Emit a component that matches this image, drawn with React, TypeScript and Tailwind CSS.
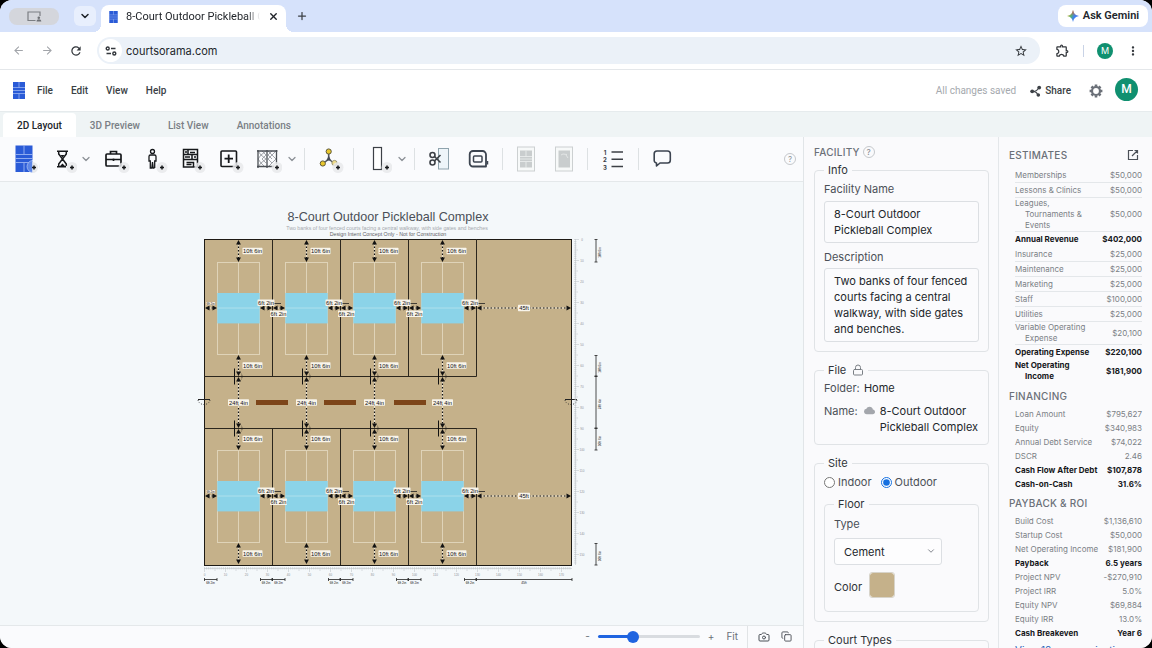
import { useState, type ReactNode } from 'react';
import { ChevronDown, Camera, Copy, Lock, Plus, X } from 'lucide-react';
import { MdArrowBack, MdArrowForward, MdCloud, MdMoreVert, MdOutlineExtension, MdRefresh, MdStarBorder } from 'react-icons/md';
import clsx from 'clsx';

/* ---------- icons ---------- */

function CourtLogo({ className }: { className?: string }) {
    return (
        <svg viewBox="0 0 12 17" className={className} aria-hidden="true">
            <rect width="12" height="17" fill="#2a5bd7" />
            <path d="M6 0v5.5M6 11.500V17M0 5.500h12M0 8.500h12M0 11.500h12" stroke="#a9c0f5" strokeWidth=".7" />
        </svg>
    );
}

function AddBadge({ x = 24 }: { x?: number }) {
    return (
        <g>
            <circle cx={x} cy="23.500" r="5.500" fill="#e7e9eb" fillOpacity=".85" />
            <path d={`M${x - 2} 23.500h4M${x} 21.500v4`} stroke="#16181b" strokeWidth="1.500" />
        </g>
    );
}

const ink = '#16181b';

const drawings = {
    court: (
        <>
            <rect x="5.500" y="1.500" width="17" height="26.500" fill="#2a5bd7" />
            <path d="M14 1.500v8.500M14 19v9M5.500 10.500h17M5.500 14.500h17M5.500 18.500h17" stroke="#a9c0f5" strokeWidth=".8" />
            <circle cx="23" cy="22.500" r="6" fill="#5d86e6" stroke="#a9c0f5" strokeWidth=".8" />
            <rect x="22.500" y="16" width="7" height="13" fill="#fafbfd" />
            <path d="M22.500 18a5.500 5.500 0 0 1 0 11z" fill="#e7e9eb" />
            <path d="M22 23.500h4M24 21.500v4" stroke={ink} strokeWidth="1.500" />
        </>
    ),
    hourglass: (
        <>
            <path d="M10 7.200h11M10 22.800h9M11.700 7.500v2.500l3.800 5-3.800 5v2.500M19.300 7.500v2.500l-3.800 5 3.800 5v2" fill="none" stroke={ink} strokeWidth="1.500" />
            <path d="M13.500 11h4l-2 2.500zM13 22l2.500-2.500L18 22z" fill={ink} />
            <AddBadge x={25} />
        </>
    ),
    briefcase: (
        <>
            <rect x="6" y="10" width="15" height="12" rx="1" fill="none" stroke={ink} strokeWidth="1.700" />
            <path d="M10.500 10V7.500h6V10M6 15.500h15M13.500 14.500v2.500" fill="none" stroke={ink} strokeWidth="1.700" />
            <AddBadge />
        </>
    ),
    person: (
        <>
            <circle cx="14.500" cy="7.500" r="2" fill="none" stroke={ink} strokeWidth="1.300" />
            <path d="M12.500 11h4c1 0 1.500.7 1.500 1.500v4.500h-1.300v7M12.500 11c-1 0-1.500.7-1.500 1.500v4.500h1.300v7h1.500l.7-6 .7 6h1.300" fill="none" stroke={ink} strokeWidth="1.300" />
            <AddBadge />
        </>
    ),
    desk: (
        <>
            <path d="M7.500 5.500h14v17.500h-14zM7.500 10.500h14M7.500 15.500h14M12 5.500v5M16 10.500v5M10.500 18.500h7v4M10.500 20.500h5" fill="none" stroke={ink} strokeWidth="1.500" />
            <path d="M9 8h2M14 8.500h5M9 13h5M18 13h2" stroke={ink} strokeWidth="1.400" />
            <AddBadge />
        </>
    ),
    box: (
        <>
            <rect x="7" y="7" width="15.500" height="15.500" rx="1" fill="none" stroke={ink} strokeWidth="1.600" />
            <path d="M10.500 14.700h8.500M14.700 10.500v8.500" stroke={ink} strokeWidth="1.800" />
            <AddBadge />
        </>
    ),
    fence: (
        <>
            <path d="M6 7l3 4-3 4 3 4-3 4M14 7l-5 4 5 4-5 4 4 4M10 7l4 4-4 4 4 4M16 7l4 4-4 4 4 4-4 4M24 7l-4 4 4 4-4 4M20 7l-4 4 4 4" fill="none" stroke="#8d9197" strokeWidth=".8" />
            <path d="M6 6v18M15 6v18M24.500 6v14M5 7h20.500M5 22.500h17" fill="none" stroke="#4b4f55" strokeWidth="1.300" />
            <AddBadge x={25} />
        </>
    ),
    nodes: (
        <>
            <path d="M13.700 9v6l-5 4M13.700 15l5 4" fill="none" stroke="#565b63" strokeWidth="1.600" />
            <path d="M13.700 11.500l2.300 5h-4.600z" fill="#464b55" />
            <circle cx="13.700" cy="7.500" r="2.600" fill="#e8c62d" stroke="#5f5a3b" />
            <circle cx="7.800" cy="19.500" r="2.600" fill="#e8c62d" stroke="#5f5a3b" />
            <circle cx="19.500" cy="19" r="2.600" fill="#efdc8a" stroke="#9a9573" />
            <AddBadge x={23} />
        </>
    ),
    door: (
        <>
            <rect x="11.500" y="3.500" width="8" height="22" fill="#fff" stroke="#3c4046" strokeWidth="1.200" />
            <AddBadge x={25} />
        </>
    ),
    scissors: (
        <>
            <rect x="14.500" y="4.500" width="10" height="20.500" fill="#eef5f9" stroke="#8fa3ad" />
            <circle cx="8.500" cy="11" r="2.500" fill="none" stroke="#3c4046" strokeWidth="1.600" />
            <circle cx="8.500" cy="18.500" r="2.500" fill="none" stroke="#3c4046" strokeWidth="1.600" />
            <path d="M10.500 12.500l6 6M10.500 17l6-6" stroke="#3c4046" strokeWidth="1.600" />
        </>
    ),
    tape: (
        <>
            <path d="M9 7h9.500a3.500 3.500 0 0 1 3.500 3.500V22.500H9a3.300 3.300 0 0 1-3.300-3.300V10.300A3.300 3.300 0 0 1 9 7z" fill="none" stroke="#3c4450" strokeWidth="1.800" strokeLinejoin="round" />
            <rect x="9.500" y="12" width="8.500" height="6" rx="1" fill="none" stroke="#3c4450" strokeWidth="1.500" />
            <path d="M23.500 17v3.500" stroke="#3c4450" strokeWidth="1.500" />
        </>
    ),
    sheet: (
        <>
            <rect x="6.500" y="3" width="17" height="24" fill="#f7f9f9" stroke="#ccd0d1" />
            <rect x="9" y="6.500" width="12" height="17" fill="#c9cdce" />
            <path d="M15 6.500v6M15 18v6M9 12.500h12M9 15h12M9 17.500h12" stroke="#eef0f0" strokeWidth=".8" />
        </>
    ),
    sheetImage: (
        <>
            <rect x="6.500" y="3" width="17" height="24" fill="#f7f9f9" stroke="#ccd0d1" />
            <rect x="9.500" y="6.500" width="11.500" height="17" fill="#c9cdce" />
            <path d="M12 11l2-1 4 .5M17 11l2 3" fill="none" stroke="#e9ebeb" strokeWidth=".8" />
        </>
    ),
    list: (
        <>
            <g fontSize="6" fontWeight="700" fill="#3c4046" fontFamily="Inter, sans-serif" textAnchor="middle">
                <text x="7" y="10.500">1</text>
                <text x="7" y="18">2</text>
                <text x="7" y="25.500">3</text>
            </g>
            <path d="M13.500 8h11.500M13.500 15.200h11.500M13.500 22.500h11.500" stroke="#3c4046" strokeWidth="1.600" />
        </>
    ),
    comment: (
        <path d="M10 7h10.500a2.800 2.800 0 0 1 2.800 2.800v6.400a2.800 2.800 0 0 1-2.800 2.800H13l-3.500 3v-3a2.500 2.500 0 0 1-2.300-2.800V9.800A2.800 2.800 0 0 1 10 7z" fill="none" stroke="#3c4450" strokeWidth="1.600" strokeLinejoin="round" />
    ),
};

function ShareIcon() {
    return (
        <svg viewBox="0 0 12 12" className="size-3" aria-hidden="true">
            <path d="M2.500 6.500C6 6.500 7 5.500 9 2.500M2.500 6.500c3.500 0 4 1 5.500 3.500" fill="none" stroke="#3c4046" strokeWidth="1.200" />
            <circle cx="2.200" cy="6.300" r="1.900" fill="#3c4046" />
            <circle cx="9.200" cy="2.600" r="1.900" fill="#3c4046" />
            <circle cx="8.300" cy="10" r="1.800" fill="#3c4046" />
        </svg>
    );
}

function GearIcon() {
    return (
        <svg viewBox="0 0 14 14" className="size-3.5" aria-hidden="true" stroke="#6b7078" fill="none">
            <circle cx="7" cy="7" r="4" strokeWidth="2.200" />
            {[0, 45, 90, 135].map((a) => (
                <path key={a} d="M7 .6v2M7 11.400v2" strokeWidth="2.600" transform={`rotate(${a} 7 7)`} />
            ))}
        </svg>
    );
}

function GeminiIcon() {
    return (
        <svg viewBox="0 0 12 12" className="size-3" aria-hidden="true">
            <defs>
                <linearGradient id="gem" x1="0" y1=".3" x2="1" y2=".7">
                    <stop offset="0" stopColor="#e8b62f" />
                    <stop offset=".35" stopColor="#55b56c" />
                    <stop offset=".6" stopColor="#3f82ee" />
                    <stop offset="1" stopColor="#4b7df0" />
                </linearGradient>
                <linearGradient id="gemTop" x1="0" y1="0" x2="0" y2="1">
                    <stop offset="0" stopColor="#e5484d" />
                    <stop offset=".5" stopColor="#e5484d" stopOpacity="0" />
                </linearGradient>
            </defs>
            <path d="M6 0c.5 3.500 2.500 5.500 6 6-3.500.5-5.500 2.500-6 6-.5-3.500-2.500-5.500-6-6 3.500-.5 5.500-2.500 6-6z" fill="url(#gem)" />
            <path d="M6 0c.5 3.500 2.500 5.500 6 6-3.500.5-5.500 2.500-6 6-.5-3.500-2.500-5.500-6-6 3.500-.5 5.500-2.500 6-6z" fill="url(#gemTop)" />
        </svg>
    );
}

/* ---------- browser chrome ---------- */

function BrowserBar() {
    return (
        <>
            <div className="h-8 shrink-0 bg-[#d6e2fb] flex items-end pl-[9px] pr-1">
                <div className="w-[50px] h-[17px] mb-[7px] rounded-lg bg-[#d4d6dc] flex items-center justify-center">
                    <svg viewBox="0 0 15 11" className="w-[15px] h-[11px]" aria-hidden="true">
                        <path d="M8.500 9.500H1V1h12v4" fill="none" stroke="#7b7e83" strokeWidth="1.200" />
                        <circle cx="11.800" cy="6.700" r="1.300" fill="#6e7176" />
                        <path d="M9.500 10.500c0-3 4.800-3 4.800 0z" fill="#6e7176" />
                    </svg>
                </div>
                <button aria-label="Search tabs" className="ml-[15px] mb-1.5 w-[22px] h-5 rounded-md bg-[#e8effd] flex items-center justify-center">
                    <ChevronDown className="size-3 text-[#1f2329]" strokeWidth={3} />
                </button>
                <div className="relative ml-[5px] w-[185px] h-[27px] rounded-t-lg bg-white flex items-center pl-2 pr-[7px] pb-1 before:absolute before:bottom-0 before:-left-2 before:size-2 before:bg-[radial-gradient(circle_at_0_0,transparent_8px,white_8px)] after:absolute after:bottom-0 after:-right-2 after:size-2 after:bg-[radial-gradient(circle_at_100%_0,transparent_8px,white_8px)]">
                    <CourtLogo className="w-[9px] h-3" />
                    <span className="ml-2 w-[134px] font-[Roboto,sans-serif] text-[11px] leading-4 text-[#22262b] whitespace-nowrap overflow-hidden [mask-image:linear-gradient(to_right,black_90%,transparent)]">8-Court Outdoor Pickleball Complex</span>
                    <button aria-label="Close tab" className="ml-auto"><X className="size-[11px] text-[#1f2329]" strokeWidth={3} /></button>
                </div>
                <button aria-label="New tab" className="ml-2.5 mb-[10px]"><Plus className="size-3 text-[#3c4046]" strokeWidth={2.500} /></button>
                <button className="ml-auto mb-[5px] h-[22px] w-[90px] rounded-lg bg-white flex items-center justify-center gap-1 font-[Roboto,sans-serif] text-[11px] font-semibold text-[#22262b]">
                    <GeminiIcon />
                    Ask Gemini
                </button>
            </div>
            <div className="h-[38px] shrink-0 bg-white border-b border-[#e4e7ea] flex items-center pl-3 pr-3">
                <button aria-label="Back" className="text-[#a2a5aa]"><MdArrowBack className="size-[13px]" /></button>
                <button aria-label="Forward" className="ml-4 text-[#a2a5aa]"><MdArrowForward className="size-[13px]" /></button>
                <button aria-label="Reload" className="ml-[15px] text-[#34383d]"><MdRefresh className="size-3.5" /></button>
                <div className="ml-[14px] flex-1 h-[27px] rounded-full bg-[#ebf1f8] flex items-center pl-0.5 pr-3">
                    <button aria-label="Site settings" className="size-[23px] rounded-full bg-white flex items-center justify-center">
                        <svg viewBox="0 0 12 10" className="w-3 h-2.5" aria-hidden="true" stroke="#34383d" strokeWidth="1.400" fill="none">
                            <circle cx="2.700" cy="2.500" r="1.500" />
                            <path d="M6 2.500h4.500M1.500 7.500h4.500" />
                            <circle cx="9.300" cy="7.500" r="1.500" />
                        </svg>
                    </button>
                    <input aria-label="Address" defaultValue="courtsorama.com" className="ml-1 flex-1 bg-transparent outline-none text-[11px] leading-4 text-[#22262b]" />
                    <button aria-label="Bookmark" className="text-[#34383d]"><MdStarBorder className="size-[14px]" /></button>
                </div>
                <button aria-label="Extensions" className="ml-[15px] text-[#34383d]"><MdOutlineExtension className="size-[15px]" /></button>
                <div className="ml-[13px] w-px h-3 bg-[#c9d3e6]" />
                <button aria-label="Profile" className="ml-[13px] size-4 rounded-full bg-[#109070] text-white text-[9px] leading-4">M</button>
                <button aria-label="Menu" className="ml-[13px] text-[#34383d]"><MdMoreVert className="size-[14px]" /></button>
            </div>
        </>
    );
}

function AppHeader() {
    return (
        <header className="h-[42px] shrink-0 bg-white border-b border-[#e6ebed] flex items-center pl-[13px] pr-3.5 font-[Roboto,sans-serif]">
            <CourtLogo className="w-3 h-[17px]" />
            <nav className="ml-3 flex gap-[18px] text-[10px] font-medium text-[#3a3f45]">
                <button>File</button>
                <button>Edit</button>
                <button>View</button>
                <button>Help</button>
            </nav>
            <span className="ml-auto text-[10px] text-[#a5a9ae]">All changes saved</span>
            <button className="ml-3.5 flex items-center gap-[3px] text-[10px] font-medium text-[#3a3f45]">
                <ShareIcon />
                Share
            </button>
            <button aria-label="Settings" className="ml-[18px]"><GearIcon /></button>
            <button aria-label="Account" className="ml-3 mb-[3px] size-[23px] rounded-full bg-[#109070] text-white text-[12px] font-medium">M</button>
        </header>
    );
}

const tabs = ['2D Layout', '3D Preview', 'List View', 'Annotations'];

function ViewTabs() {
    const [active, setActive] = useState('2D Layout');
    return (
        <div className="h-[25px] shrink-0 bg-[#eff4f5] flex pl-[3px] font-[Roboto,sans-serif]">
            {tabs.map((t) => (
                <button
                    key={t}
                    onClick={() => setActive(t)}
                    className={clsx('mt-px px-3.5 text-[10px] font-medium', active === t ? 'bg-white text-[#22262b] rounded-t' : 'text-[#7a7f85]')}
                >
                    {t}
                </button>
            ))}
        </div>
    );
}

/* ---------- toolbar ---------- */

function Tool({ icon, label, className }: { icon: keyof typeof drawings; label: string; className: string }) {
    return (
        <button aria-label={label} className={clsx('h-[30px] flex items-center justify-center shrink-0', className)}>
            <svg viewBox="0 0 30 30" className="size-[30px] shrink-0" aria-hidden="true">{drawings[icon]}</svg>
        </button>
    );
}

function More({ label }: { label: string }) {
    return (
        <button aria-label={label} className="w-3 shrink-0 text-[#8b9096]">
            <ChevronDown className="size-3" strokeWidth={2.500} />
        </button>
    );
}

function Divider({ className }: { className: string }) {
    return (
        <div className={clsx('flex justify-center shrink-0', className)}>
            <div className="w-px h-[22px] bg-[#dde1e3]" />
        </div>
    );
}

function HelpMark() {
    return (
        <button aria-label="Help" className="size-3 rounded-full border border-[#c5c8cc] text-[#8f9399] text-[8px] leading-[10px]">?</button>
    );
}

function Toolbar() {
    return (
        <div className="h-[45px] shrink-0 bg-[#fafbfd] border-b border-[#e4e8ea] flex items-center pl-1.5 pr-[7px]">
            <Tool icon="court" label="Add court" className="w-[38px]" />
            <Tool icon="hourglass" label="Add waiting area" className="w-9" />
            <More label="More areas" />
            <Tool icon="briefcase" label="Add equipment" className="w-[38px] ml-1" />
            <Tool icon="person" label="Add person" className="w-[38px]" />
            <Tool icon="desk" label="Add furniture" className="w-[38px]" />
            <Tool icon="box" label="Add area" className="w-[38px]" />
            <Tool icon="fence" label="Add fence" className="w-[38px]" />
            <More label="More fences" />
            <Divider className="w-[13px]" />
            <Tool icon="nodes" label="Add path" className="w-[38px]" />
            <Divider className="w-2" />
            <Tool icon="door" label="Add column" className="w-[39px]" />
            <More label="More columns" />
            <Divider className="w-[12px]" />
            <Tool icon="scissors" label="Cut" className="w-[38px]" />
            <Tool icon="tape" label="Measure" className="w-[38px] ml-0.5" />
            <Divider className="w-[9px]" />
            <Tool icon="sheet" label="Fill court" className="w-[38px]" />
            <Tool icon="sheetImage" label="Fill image" className="w-[38px]" />
            <Divider className="w-[9px]" />
            <Tool icon="list" label="Numbering" className="w-[42px]" />
            <Divider className="w-2" />
            <Tool icon="comment" label="Comment" className="w-[40px]" />
            <div className="ml-auto flex"><HelpMark /></div>
        </div>
    );
}

/* ---------- floor plan ---------- */

const left = 204;
const right = 572;
const top = 239;
const bottom = 565;
const pitch = 68;

function VArrow({ x, y1, y2 }: { x: number; y1: number; y2: number }) {
    return (
        <g>
            <path d={`M${x} ${y1 + 3}V${y2 - 3}`} stroke="#e9e1cf" strokeWidth="1.200" />
            <path d={`M${x} ${y1 + 3}V${y2 - 3}`} stroke="#111" strokeWidth="1.200" strokeDasharray="1.500 2" />
            <path d={`M${x} ${y1}l2.400 4.500h-4.800zM${x} ${y2}l2.400-4.500h-4.800z`} fill="#111" />
        </g>
    );
}

function HArrow({ y, x1, x2 }: { y: number; x1: number; x2: number }) {
    return (
        <g>
            <path d={`M${x1 + 3} ${y}H${x2 - 3}`} stroke="#e9e1cf" strokeWidth="1.200" />
            <path d={`M${x1 + 3} ${y}H${x2 - 3}`} stroke="#111" strokeWidth="1.200" strokeDasharray="1.500 2" />
            <path d={`M${x1} ${y}l4.500-2.400v4.800zM${x2} ${y}l-4.500-2.400v4.800z`} fill="#111" />
        </g>
    );
}

function Tag({ x, y, w, children }: { x: number; y: number; w: number; children: ReactNode }) {
    return (
        <g>
            <rect x={x - w / 2} y={y - 3.200} width={w} height="6.400" rx=".6" fill="#f8f4ea" />
            <text x={x} y={y + 2} fontSize="5.800" textAnchor="middle" fill="#111">{children}</text>
        </g>
    );
}

// one court with its clearances; y is the court's top line
function Court({ x, y, fenceTop, fenceBottom, first }: { x: number; y: number; fenceTop: number; fenceBottom: number; first: boolean }) {
    const mid = x + 34.500;
    const net = y + 46;
    return (
        <g>
            <rect x={x + 13.500} y={y + .5} width="42" height="92" fill="none" stroke="#dfd3b8" />
            <path d={`M${mid} ${y}v92.400`} stroke="#dfd3b8" />
            <rect x={x + 13.300} y={y + 31} width="42.400" height="30.400" fill="#8bd3e8" />
            <path d={`M${x + 13.300} ${net}h42.400`} stroke="#bfe6ee" strokeWidth=".7" />
            <VArrow x={mid} y1={fenceTop + 1} y2={y} />
            <VArrow x={mid} y1={y + 93} y2={fenceBottom} />
            <HArrow y={net} x1={x + 56} x2={x + 68} />
            <path d={`M${x + 70} ${net - 4.500}h7`} stroke="#222" strokeWidth=".8" />
            {first && <HArrow y={net} x1={x + 1} x2={x + 13} />}
        </g>
    );
}

function CourtTags({ x, y, first, last }: { x: number; y: number; first: boolean; last: boolean }) {
    return (
        <g>
            <Tag x={x + 48.500} y={y - 11} w={20}>10ft 6in</Tag>
            <Tag x={x + 48.500} y={y + 103.500} w={20}>10ft 6in</Tag>
            <Tag x={x + 62} y={y + 40.700} w={17}>6ft 2in</Tag>
            {!last && <Tag x={x + 74.500} y={y + 51.700} w={17}>6ft 2in</Tag>}
            {first && (
                <g>
                    <rect x={x + 2} y={y + 40} width="9" height="3.200" fill="#f3ecdc" />
                    <text x={x + 6.500} y={y + 42.700} fontSize="3" textAnchor="middle" fill="#222">6ft 2in</text>
                </g>
            )}
        </g>
    );
}

function Gate({ x, y }: { x: number; y: number }) {
    return (
        <g fill="none" stroke="#111">
            <path d={`M${x - 4} ${y - 8}v16`} />
            <path d={`M${x + 2} ${y - 4}a6 6 0 0 1 0 8`} strokeWidth=".8" strokeDasharray="1 1.500" />
        </g>
    );
}

function SideGate({ x }: { x: number }) {
    return (
        <g fill="none" stroke="#222">
            <path d={`M${x - 6} 399.500h12`} />
            <path d={`M${x - 6} 400c1 6 11 6 12 0`} strokeWidth=".8" strokeDasharray="1 1.500" />
        </g>
    );
}

const vDims = [[239, 262, '10ft 6in'], [355, 376, '10ft 6in'], [376, 428, '24ft 4in'], [428, 450, '10ft 6in'], [543, 565, '10ft 6in']] as const;
const hDims = [
    [204, 217, '6ft 2in'], [260, 272, '6ft 2in'], [272, 285, '6ft 2in'], [328, 340, '6ft 2in'], [340, 353, '6ft 2in'],
    [396, 408, '6ft 2in'], [408, 421, '6ft 2in'], [464, 476, '6ft 2in'], [476, 572, '45ft'],
] as const;

function FloorPlan() {
    const rows = [
        { y: 262, fenceTop: 239, fenceBottom: 376 },
        { y: 450, fenceTop: 428, fenceBottom: 564 },
    ];
    const cols = [0, 1, 2, 3];
    const ticks = (n: number) => Array.from({ length: n }, (_, i) => i);
    return (
        <svg viewBox="195 205 413 398" className="w-[413px] max-w-full h-auto" fontFamily="'Liberation Sans', Arial, sans-serif" role="img" aria-label="8-Court Outdoor Pickleball Complex plan">
            <text x="388" y="220.500" fontSize="12.600" textAnchor="middle" fill="#4a4f57">8-Court Outdoor Pickleball Complex</text>
            <text x="387" y="229.500" fontSize="5.250" textAnchor="middle" fill="#a6a9ae">Two banks of four fenced courts facing a central walkway, with side gates and benches</text>
            <text x="388" y="236" fontSize="5.300" textAnchor="middle" fill="#5c6067">Design Intent Concept Only - Not for Construction</text>

            <rect x={left + .5} y={top + .5} width={right - left - 1} height={bottom - top} fill="#c5b18a" stroke="#1d1a14" />
            {cols.map((c) => (
                <g key={c}>
                    <path d={`M${272.500 + c * pitch} 239V376.500M${272.500 + c * pitch} 428.500V565`} stroke="#2b261d" />
                </g>
            ))}
            <path d="M204 376.500H476.500M204 428.500H476.500" stroke="#2b261d" />

            {rows.map((r) => cols.map((c) => (
                <Court key={`${r.y}-${c}`} x={left + c * pitch} first={c === 0} {...r} />
            )))}
            {[308, 496].map((y) => (
                <g key={y}>
                    <HArrow y={y} x1={477} x2={571} />
                    <Tag x={524} y={y} w={12}>45ft</Tag>
                    {[0, 1, 2].map((c) => <HArrow key={c} y={y} x1={273 + c * pitch} x2={285 + c * pitch} />)}
                </g>
            ))}
            {cols.map((c) => (
                <g key={c}>
                    <VArrow x={238.500 + c * pitch} y1={377} y2={428} />
                    <Gate x={238.500 + c * pitch} y={376.500} />
                    <Gate x={238.500 + c * pitch} y={428.500} />
                    <Tag x={238.500 + c * pitch} y={402.500} w={21}>24ft 4in</Tag>
                </g>
            ))}
            {rows.map((r) => cols.map((c) => (
                <CourtTags key={`${r.y}-${c}`} x={left + c * pitch} y={r.y} first={c === 0} last={c === 3} />
            )))}
            {[256, 324, 394].map((x) => <rect key={x} x={x} y="400" width="32" height="5" fill="#7d4519" />)}
            <SideGate x={204} />
            <SideGate x={571} />

            {/* rulers */}
            <g stroke="#b9bec3" strokeWidth=".5" fill="none">
                <path d="M204 568.500H572M575.500 239V565" />
                <path d={ticks(175).map((i) => `M${204.500 + i * 2.100} 567v${i % 10 === 0 ? 5 : i % 5 === 0 ? 4 : 2.500}`).join('')} />
                <path d={ticks(155).map((i) => `M574 ${239.500 + i * 2.100}h${i % 10 === 0 ? 5 : i % 5 === 0 ? 4 : 2.500}`).join('')} />
            </g>
            <g fontSize="3" fill="#8d9298" textAnchor="middle">
                {ticks(18).map((i) => <text key={i} x={204.500 + i * 21} y="576">{i * 10}</text>)}
                {ticks(16).map((i) => <text key={i} x="582" y={240.500 + i * 21}>{i * 10}</text>)}
            </g>

            {/* outer dimensions */}
            <g stroke="#222" strokeWidth=".8">
                {vDims.map(([a, b]) => <path key={a} d={`M596 ${a + .5}V${b}M594.500 ${a + .5}h3M594.500 ${b}h3`} />)}
                {hDims.map(([a, b]) => <path key={a} d={`M${a + .5} 579.500H${b}M${a + .5} 578v3M${b} 578v3`} />)}
            </g>
            <g fontSize="3.200" fill="#111" textAnchor="middle">
                {vDims.map(([a, b, t]) => <text key={a} transform={`translate(601 ${(a + b) / 2 + 2}) rotate(-90)`}>{t}</text>)}
                {hDims.map(([a, b, t]) => <text key={a} x={(a + b) / 2} y="584">{t}</text>)}
            </g>
        </svg>
    );
}

function ZoomBar() {
    const [zoom, setZoom] = useState(32);
    return (
        <div className="h-[23px] shrink-0 bg-[#fafbfd] border-t border-[#e4e8ea] flex items-center justify-end pr-[11px] pb-px text-[10px] text-[#6b7078]">
            <button aria-label="Zoom out" onClick={() => setZoom(Math.max(0, zoom - 5))}>-</button>
            <input
                type="range"
                aria-label="Zoom"
                value={zoom}
                onChange={(e) => setZoom(Number(e.target.value))}
                style={{ backgroundImage: `linear-gradient(to right, #1f64e0 ${zoom}%, #d9dce0 ${zoom}%)` }}
                className="ml-2 w-[102px] h-[3px] rounded-full appearance-none [&::-webkit-slider-thumb]:appearance-none [&::-webkit-slider-thumb]:size-3 [&::-webkit-slider-thumb]:rounded-full [&::-webkit-slider-thumb]:bg-[#1f64e0]"
            />
            <button aria-label="Zoom in" className="ml-2" onClick={() => setZoom(Math.min(100, zoom + 5))}>+</button>
            <button className="ml-3">Fit</button>
            <div className="ml-[9px] w-px h-[22px] bg-[#e1e4e6]" />
            <button aria-label="Snapshot" className="ml-2.5 text-[#4b5057]"><Camera className="size-3" /></button>
            <button aria-label="Copy" className="ml-[11px] text-[#4b5057]"><Copy className="size-[11px]" /></button>
        </div>
    );
}

/* ---------- facility panel ---------- */

const legend = 'px-1 text-[#2f3338]';
const box = 'block w-full resize-none overflow-hidden rounded-[3px] border border-[#dcdfe3] bg-[#fbfbfd] px-[9px] py-1 text-[#22262b] outline-none';

function FacilityPanel() {
    return (
        <aside className="w-[195px] shrink-0 border-l border-[#e1e5e8] bg-[#fafafc] overflow-hidden pl-2.5 pr-[9px] pt-[7px] text-[11px] leading-4 text-[#4b5057]">
            <h2 className="h-4 mb-0.5 flex items-center gap-[3px] text-[10px] font-medium tracking-wide text-[#6b7078]">FACILITY <HelpMark /></h2>

            <fieldset className="rounded border border-[#e0e3e6] px-[9px] pb-[9px]">
                <legend className={legend}>Info</legend>
                <label htmlFor="name" className="block mt-[3px]">Facility Name</label>
                <textarea id="name" rows={2} defaultValue="8-Court Outdoor Pickleball Complex" className={clsx(box, 'mt-1')} />
                <label htmlFor="desc" className="block mt-1.5">Description</label>
                <textarea id="desc" rows={4} defaultValue="Two banks of four fenced courts facing a central walkway, with side gates and benches." className={clsx(box, 'mt-[3px]')} />
            </fieldset>

            <fieldset className="mt-2.5 rounded border border-[#e0e3e6] px-[9px] pb-[9px]">
                <legend className={legend}>
                    <span className="flex items-center gap-1.5">File <Lock className="size-3 text-[#7a7f85]" /></span>
                </legend>
                <p className="mt-[2px]">Folder: <span className="ml-px text-[#22262b]">Home</span></p>
                <div className="mt-[7px] flex whitespace-nowrap">
                    <span>Name:</span>
                    <MdCloud className="ml-1.5 mt-0.5 size-[11px] shrink-0 text-[#a3a6ac]" />
                    <span className="ml-[5px] text-[#22262b]">8-Court Outdoor<br />Pickleball Complex</span>
                </div>
            </fieldset>

            <fieldset className="mt-2.5 rounded border border-[#e0e3e6] px-[9px] pb-[9px]">
                <legend className={legend}>Site</legend>
                <div className="mt-[3px] flex gap-[9px]">
                    <label className="flex items-center gap-[3px]">
                        <input type="radio" name="site" className="m-0 size-[11px] accent-[#1570e0]" />
                        Indoor
                    </label>
                    <label className="flex items-center gap-[3px]">
                        <input type="radio" name="site" defaultChecked className="m-0 size-[11px] accent-[#1570e0]" />
                        Outdoor
                    </label>
                </div>
                <fieldset className="mt-1.5 rounded border border-[#e0e3e6] px-[9px] pb-[13px]">
                    <legend className={legend}>Floor</legend>
                    <label htmlFor="floor" className="block mt-1">Type</label>
                    <div className="relative mt-1.5 w-[108px]">
                        <select id="floor" defaultValue="Cement" className="w-full h-[27px] appearance-none rounded-[3px] border border-[#dcdfe3] bg-[#fdfdfe] pl-[9px] text-[#22262b]">
                            <option>Cement</option>
                            <option>Wood</option>
                            <option>Asphalt</option>
                        </select>
                        <ChevronDown className="pointer-events-none absolute right-1.5 top-2 size-2.5 text-[#6b7078]" />
                    </div>
                    <div className="mt-[7px] flex items-center gap-[7px]">
                        <label htmlFor="color" className="pt-1 text-[#2f3338]">Color</label>
                        <input id="color" type="color" defaultValue="#c5b18a" className="size-[26px] rounded-[3px] border border-[#d8d4ca] [&::-webkit-color-swatch-wrapper]:p-0 [&::-webkit-color-swatch]:border-0 [&::-webkit-color-swatch]:rounded-[3px]" />
                    </div>
                </fieldset>
            </fieldset>

            <fieldset className="mt-2.5 h-10 rounded border border-[#e0e3e6] px-[9px]">
                <legend className={legend}>Court Types</legend>
            </fieldset>
        </aside>
    );
}

/* ---------- estimates panel ---------- */

type Row = { label: string; value: string; strong?: boolean };

const estimates: Row[] = [
    { label: 'Memberships', value: '$50,000' },
    { label: 'Lessons & Clinics', value: '$50,000' },
    { label: 'Leagues, Tournaments & Events', value: '$50,000' },
    { label: 'Annual Revenue', value: '$402,000', strong: true },
    { label: 'Insurance', value: '$25,000' },
    { label: 'Maintenance', value: '$25,000' },
    { label: 'Marketing', value: '$25,000' },
    { label: 'Staff', value: '$100,000' },
    { label: 'Utilities', value: '$25,000' },
    { label: 'Variable Operating Expense', value: '$20,100' },
    { label: 'Operating Expense', value: '$220,100', strong: true },
    { label: 'Net Operating Income', value: '$181,900', strong: true },
];

const financing: Row[] = [
    { label: 'Loan Amount', value: '$795,627' },
    { label: 'Equity', value: '$340,983' },
    { label: 'Annual Debt Service', value: '$74,022' },
    { label: 'DSCR', value: '2.46' },
    { label: 'Cash Flow After Debt', value: '$107,878', strong: true },
    { label: 'Cash-on-Cash', value: '31.6%', strong: true },
];

const payback: Row[] = [
    { label: 'Build Cost', value: '$1,136,610' },
    { label: 'Startup Cost', value: '$50,000' },
    { label: 'Net Operating Income', value: '$181,900' },
    { label: 'Payback', value: '6.5 years', strong: true },
    { label: 'Project NPV', value: '-$270,910' },
    { label: 'Project IRR', value: '5.0%' },
    { label: 'Equity NPV', value: '$69,884' },
    { label: 'Equity IRR', value: '13.0%' },
    { label: 'Cash Breakeven', value: 'Year 6', strong: true },
];

function Figures({ rows, ruled }: { rows: Row[]; ruled?: boolean }) {
    return (
        <table className="ml-1.5 w-[127px] border-separate border-spacing-0 text-[8px] leading-[11px]">
            <tbody>
                {rows.map((r) => (
                    <tr key={r.label} className={r.strong ? 'font-bold text-[#16181b]' : 'text-[#7a7f85]'}>
                        <th scope="row" className={clsx('p-0 text-left align-middle', r.strong ? 'font-bold' : 'font-normal', ruled ? 'h-[15px]' : 'h-3.5', ruled && !r.strong && 'border-b border-[#e4e7ea]')}>
                            <span className={clsx('block pl-2.5 -indent-2.5', ruled ? 'max-w-[78px]' : 'whitespace-nowrap')}>{r.label}</span>
                        </th>
                        <td className={clsx('p-0 text-right align-middle', ruled && !r.strong && 'border-b border-[#e4e7ea]')}>{r.value}</td>
                    </tr>
                ))}
            </tbody>
        </table>
    );
}

const heading = 'text-[10px] leading-4 font-medium tracking-wide text-[#6b7078]';

function EstimatesPanel() {
    return (
        <aside className="w-[154px] shrink-0 border-l border-[#e4e7ea] bg-[#fafafc] overflow-hidden pl-2.5 pr-2 pt-2.5">
            <div className="flex items-center justify-between pr-[5px] mb-[5px]">
                <h2 className={heading}>ESTIMATES</h2>
                <button aria-label="Open estimates">
                    <svg viewBox="0 0 12 12" className="size-3" aria-hidden="true" fill="none" stroke="#4b5057" strokeWidth="1.200">
                        <path d="M6 1.500H1.500v9h9V6M5 7l5.500-5.500M7.500 1.500h3v3" />
                    </svg>
                </button>
            </div>
            <Figures rows={estimates} ruled />
            <h2 className={clsx(heading, 'mt-1.5 mb-[3px]')}>FINANCING</h2>
            <Figures rows={financing} />
            <h2 className={clsx(heading, 'mt-1 mb-[3px]')}>PAYBACK &amp; ROI</h2>
            <Figures rows={payback} />
            <a href="#projection" className="block ml-1.5 mt-1 text-[10px] leading-3 text-[#2a63b8] whitespace-nowrap">View 10-year projection</a>
        </aside>
    );
}

export default function App() {
    return (
        <div className="h-screen bg-black">
            <div className="h-full flex flex-col overflow-hidden rounded-xl bg-white font-[Inter,sans-serif]">
                <BrowserBar />
                <AppHeader />
                <ViewTabs />
                <div className="flex-1 min-h-0 flex">
                    <main className="flex-1 min-w-0 flex flex-col">
                        <Toolbar />
                        <div className="flex-1 min-h-0 bg-[#f4f8fa] flex items-center justify-center">
                            <FloorPlan />
                        </div>
                        <ZoomBar />
                    </main>
                    <FacilityPanel />
                    <EstimatesPanel />
                </div>
            </div>
        </div>
    );
}
